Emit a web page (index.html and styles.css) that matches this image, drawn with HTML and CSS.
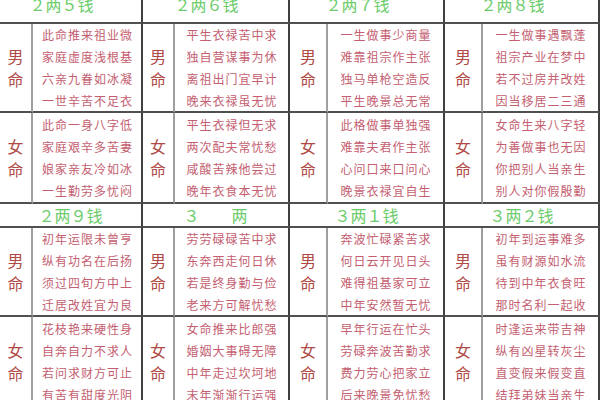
FILE: index.html
```html
<!DOCTYPE html>
<html lang="zh">
<head>
<meta charset="utf-8">
<title>称骨算命</title>
<link rel="stylesheet" href="styles.css">
</head>
<body>
<div class="chart">
  <div class="head head-top">２两５钱</div>
  <div class="head head-top">２两６钱</div>
  <div class="head head-top">２两７钱</div>
  <div class="head head-top">２两８钱</div>

  <div class="label"><span>男</span><span>命</span></div>
  <div class="verse"><span>此命推来祖业微</span><span>家庭虚度浅根基</span><span>六亲九眷如冰凝</span><span>一世辛苦不足衣</span></div>
  <div class="label"><span>男</span><span>命</span></div>
  <div class="verse"><span>平生衣禄苦中求</span><span>独自营谋事为休</span><span>离祖出门宜早计</span><span>晚来衣禄虽无忧</span></div>
  <div class="label"><span>男</span><span>命</span></div>
  <div class="verse"><span>一生做事少商量</span><span>难靠祖宗作主张</span><span>独马单枪空造反</span><span>平生晚景总无常</span></div>
  <div class="label"><span>男</span><span>命</span></div>
  <div class="verse"><span>一生做事遇飘蓬</span><span>祖宗产业在梦中</span><span>若不过房并改姓</span><span>因当移居二三通</span></div>

  <div class="label"><span>女</span><span>命</span></div>
  <div class="verse"><span>此命一身八字低</span><span>家庭艰辛多苦妻</span><span>娘家亲友冷如冰</span><span>一生勤劳多忧闷</span></div>
  <div class="label"><span>女</span><span>命</span></div>
  <div class="verse"><span>平生衣禄但无求</span><span>两次配夫常忧愁</span><span>咸酸苦辣他尝过</span><span>晚年衣食本无忧</span></div>
  <div class="label"><span>女</span><span>命</span></div>
  <div class="verse"><span>此格做事单独强</span><span>难靠夫君作主张</span><span>心问口来口问心</span><span>晚景衣禄宜自生</span></div>
  <div class="label"><span>女</span><span>命</span></div>
  <div class="verse"><span>女命生来八字轻</span><span>为善做事也无因</span><span>你把别人当亲生</span><span>别人对你假殷勤</span></div>

  <div class="head">２两９钱</div>
  <div class="head">３　　两</div>
  <div class="head">３两１钱</div>
  <div class="head">３两２钱</div>

  <div class="label"><span>男</span><span>命</span></div>
  <div class="verse"><span>初年运限未曾亨</span><span>纵有功名在后扬</span><span>须过四旬方中上</span><span>迁居改姓宜为良</span></div>
  <div class="label"><span>男</span><span>命</span></div>
  <div class="verse"><span>劳劳碌碌苦中求</span><span>东奔西走何日休</span><span>若是终身勤与俭</span><span>老来方可解忧愁</span></div>
  <div class="label"><span>男</span><span>命</span></div>
  <div class="verse"><span>奔波忙碌紧苦求</span><span>何日云开见日头</span><span>难得祖基家可立</span><span>中年安然暂无忧</span></div>
  <div class="label"><span>男</span><span>命</span></div>
  <div class="verse"><span>初年到运事难多</span><span>虽有财源如水流</span><span>待到中年衣食旺</span><span>那时名利一起收</span></div>

  <div class="label"><span>女</span><span>命</span></div>
  <div class="verse"><span>花枝艳来硬性身</span><span>自奔自力不求人</span><span>若问求财方可止</span><span>有苦有甜度光阴</span></div>
  <div class="label"><span>女</span><span>命</span></div>
  <div class="verse"><span>女命推来比郎强</span><span>婚姻大事碍无障</span><span>中年走过坎坷地</span><span>末年渐渐行运强</span></div>
  <div class="label"><span>女</span><span>命</span></div>
  <div class="verse"><span>早年行运在忙头</span><span>劳碌奔波苦勤求</span><span>费力劳心把家立</span><span>后来晚景免忧愁</span></div>
  <div class="label"><span>女</span><span>命</span></div>
  <div class="verse"><span>时逢运来带吉神</span><span>纵有凶星转灰尘</span><span>直变假来假变直</span><span>结拜弟妹当亲生</span></div>
</div>
</body>
</html>
```

FILE: styles.css
```css
html, body {
  margin: 0;
  padding: 0;
  background: #ffffff;
  overflow: hidden;
}

body {
  width: 600px;
  height: 400px;
  font-family: "Noto Sans CJK SC", "Noto Sans", sans-serif;
}

.chart {
  margin-top: -11px;
  display: grid;
  grid-template-columns: 33px 110px 32px 115px 38px 117px 38px 117px;
  grid-template-rows: 35px 89px 91px 24px 89px 91px;
}

.chart > div {
  box-sizing: border-box;
  border-bottom: 2px solid #505050;
}

.head {
  grid-column: span 2;
  border-right: 2px solid #404040;
  display: flex;
  align-items: center;
  justify-content: center;
  color: #6ccc6c;
  font-size: 16px;
  line-height: 16px;
}

.head-top {
  align-items: flex-start;
  padding-top: 7px;
  padding-right: 18px;
}

.label {
  border-right: 2px solid #a0a0a0;
  display: flex;
  flex-direction: column;
  align-items: center;
  justify-content: center;
  color: #b04a46;
  font-size: 16px;
  line-height: 23px;
}

.verse {
  border-right: 2px solid #404040;
  display: flex;
  flex-direction: column;
  align-items: center;
  justify-content: center;
  color: #c45e70;
  font-size: 12px;
  line-height: 22px;
  letter-spacing: 1px;
  white-space: nowrap;
}

.verse span {
  margin-right: -1px;
}
```
